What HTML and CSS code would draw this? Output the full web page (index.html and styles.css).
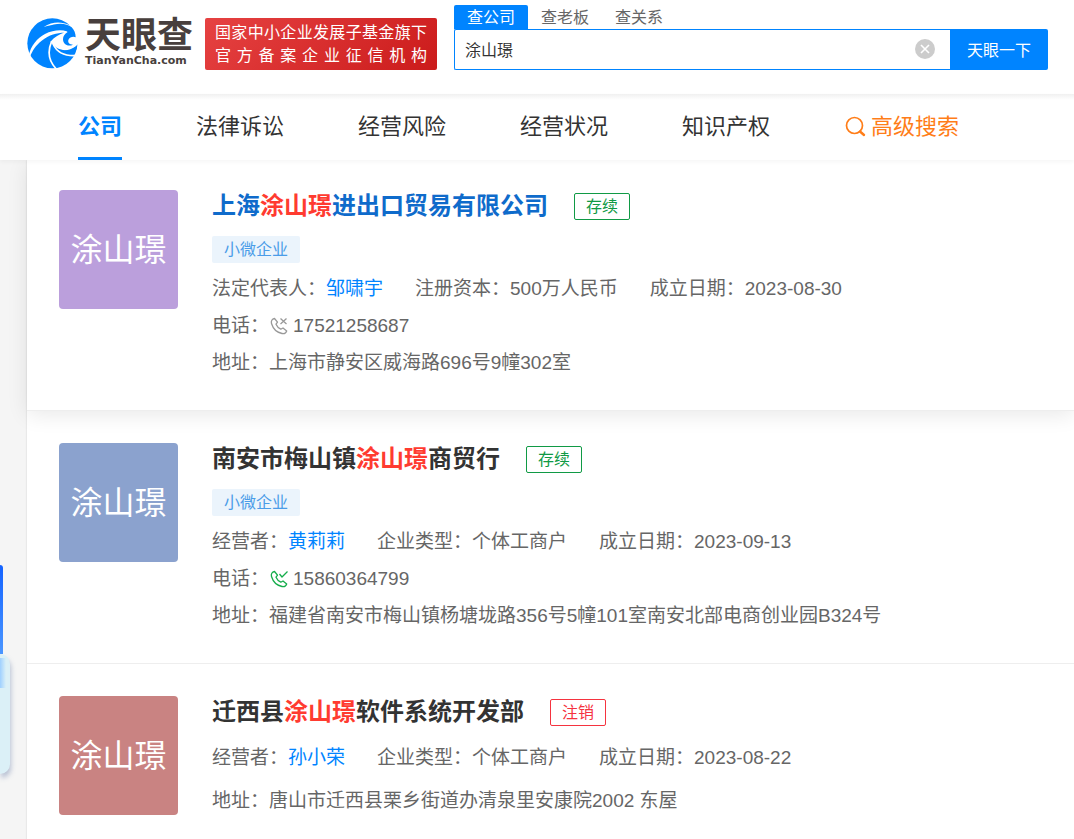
FILE: index.html
```html
<!DOCTYPE html>
<html lang="zh-CN">
<head>
<meta charset="utf-8">
<meta name="viewport" content="width=device-width, initial-scale=1">
<title>涂山璟 - 天眼查</title>
<link rel="stylesheet" href="styles.css">
</head>
<body>
<header class="header">
  <a class="logo" href="#">
    <svg class="logo-mark" viewBox="0 0 153 153" aria-hidden="true">
      <circle cx="76" cy="76" r="75" fill="#0084ff"/>
      <path fill="#fff" d="M50 27C76 10 104 10 128 22L138 14L156 40V72C146 92 128 100 108 96C96 94 88 90 82 84L70 72C82 56 98 48 112 44C90 44 66 50 44 68C26 82 16 98 9 116L5 112C12 84 30 60 54 48C76 37 100 34 122 40C106 24 78 18 50 27Z"/>
      <path fill="#0084ff" d="M60 26C88 14 118 14 134 28C142 36 146 46 146 58C138 54 128 58 124 66C122 74 128 80 138 80C122 88 108 78 108 64C108 54 113 48 122 42C112 34 84 26 60 26Z"/>
      <path fill="#0084ff" d="M86 94C106 102 132 98 151 82C150 94 145 104 138 111C116 116 98 108 86 94Z"/>
      <path fill="none" stroke="#fff" stroke-width="5" d="M78 78C88 100 108 114 144 113M88 153C66 130 60 102 74 70"/>
    </svg>
    <span class="logo-words"><span class="logo-name">天眼查</span><span class="logo-domain">TianYanCha.com</span></span>
  </a>
  <p class="banner"><span class="banner-line">国家中小企业发展子基金旗下</span><span class="banner-line">官方备案企业征信机构</span></p>
  <form class="search">
    <div class="search-tabs">
      <button type="button" class="search-tab search-tab-active">查公司</button>
      <button type="button" class="search-tab">查老板</button>
      <button type="button" class="search-tab">查关系</button>
    </div>
    <div class="search-row">
      <div class="search-box">
        <input class="search-input" type="text" aria-label="搜索公司" value="涂山璟">
        <button type="button" class="search-clear" aria-label="清空">
          <svg viewBox="0 0 20 20" width="20" height="20"><circle cx="10" cy="10" r="10" fill="#ccc"/><path d="M6 6l8 8M14 6l-8 8" stroke="#fff" stroke-width="1.6"/></svg>
        </button>
      </div>
      <button type="submit" class="search-submit">天眼一下</button>
    </div>
  </form>
</header>
<nav class="nav">
  <a class="nav-item nav-item-active" href="#">公司</a>
  <a class="nav-item" href="#">法律诉讼</a>
  <a class="nav-item" href="#">经营风险</a>
  <a class="nav-item" href="#">经营状况</a>
  <a class="nav-item" href="#">知识产权</a>
  <a class="nav-item nav-item-advanced" href="#"><svg class="nav-icon" viewBox="0 0 22 22" aria-hidden="true"><circle cx="10.500" cy="9.500" r="8" fill="none" stroke="currentColor" stroke-width="1.7"/><path d="M16 15.500l4 3.500" stroke="currentColor" stroke-width="2.400" stroke-linecap="round"/></svg>高级搜索</a>
</nav>
<main class="results">
  <article class="item item-hover">
    <div class="avatar avatar-purple">涂山璟</div>
    <div class="info">
      <div class="title-row"><h2 class="title"><a href="#">上海<em>涂山璟</em>进出口贸易有限公司</a></h2><span class="status">存续</span></div>
      <div class="tags"><span class="tag">小微企业</span></div>
      <div class="row"><span>法定代表人：<a href="#">邹啸宇</a></span><span>注册资本：500万人民币</span><span>成立日期：2023-08-30</span></div>
      <div class="row"><span class="phone">电话：<svg class="phone-icon phone-off" viewBox="0 0 18 18" aria-hidden="true"><path d="M4.500 1.500C2 2 .8 4 1.500 6.500C3 11.500 7 15.500 12 16.500C14.500 17 16 16 16.700 14L13 11L10.800 12.200C8.500 11 7 9.500 6 7.200L7.500 5.200Z"/><path d="M10.500 1.500l6 5.500M16.500 1.500l-6 5.500"/></svg>17521258687</span></div>
      <div class="row"><span>地址：上海市静安区威海路696号9幢302室</span></div>
    </div>
  </article>
  <article class="item">
    <div class="avatar avatar-blue">涂山璟</div>
    <div class="info">
      <div class="title-row"><h2 class="title"><a href="#">南安市梅山镇<em>涂山璟</em>商贸行</a></h2><span class="status">存续</span></div>
      <div class="tags"><span class="tag">小微企业</span></div>
      <div class="row"><span>经营者：<a href="#">黄莉莉</a></span><span>企业类型：个体工商户</span><span>成立日期：2023-09-13</span></div>
      <div class="row"><span class="phone">电话：<svg class="phone-icon phone-on" viewBox="0 0 18 18" aria-hidden="true"><path d="M4.500 1.500C2 2 .8 4 1.500 6.500C3 11.500 7 15.500 12 16.500C14.500 17 16 16 16.700 14L13 11L10.800 12.200C8.500 11 7 9.500 6 7.200L7.500 5.200Z"/><path d="M9.500 4l2.500 3l5.500-5.500"/></svg>15860364799</span></div>
      <div class="row"><span>地址：福建省南安市梅山镇杨塘垅路356号5幢101室南安北部电商创业园B324号</span></div>
    </div>
  </article>
  <article class="item item-plain">
    <div class="avatar avatar-red">涂山璟</div>
    <div class="info">
      <div class="title-row"><h2 class="title"><a href="#">迁西县<em>涂山璟</em>软件系统开发部</a></h2><span class="status status-closed">注销</span></div>
      <div class="row"><span>经营者：<a href="#">孙小荣</a></span><span>企业类型：个体工商户</span><span>成立日期：2023-08-22</span></div>
      <div class="row"><span>地址：唐山市迁西县栗乡街道办清泉里安康院2002 东屋</span></div>
    </div>
  </article>
</main>
<aside class="dock" aria-hidden="true"><div class="dock-strip"></div><div class="dock-card"></div></aside>
</body>
</html>
```
FILE: styles.css
```css
* { box-sizing: border-box; }
body {
  margin: 0;
  background: #f5f5f5;
  color: #333;
  font-family: "Liberation Sans", "Noto Sans CJK SC", sans-serif;
  font-size: 16px;
  overflow-x: hidden;
}
a { color: inherit; text-decoration: none; }
button, input { font: inherit; }
button { border: 0; padding: 0; background: none; cursor: pointer; }

.header {
  display: flex;
  align-items: flex-start;
  height: 94px;
  padding: 0 26px 0 27px;
  background: #fff;
}
.logo { display: flex; gap: 7px; margin-top: 18px; color: #483f3d; }
.logo-mark { width: 51px; height: 51px; }
.logo-words { display: flex; flex-direction: column; width: 109px; }
.logo-name { font-size: 36px; line-height: 36px; font-weight: bold; }
.logo-domain { font: bold 11px/14px "DejaVu Sans", sans-serif; }
.banner {
  width: 232px;
  height: 52px;
  margin: 18px 17px 0 11px;
  padding: 3px 10px;
  border-radius: 2px;
  background: linear-gradient(135deg, #e64242, #cb1b1b);
  color: #fff;
  white-space: nowrap;
}
.banner-line { display: block; line-height: 23px; text-align: justify; text-align-last: justify; }

.search { flex: 1; margin-top: 5px; }
.search-tabs { display: flex; }
.search-tab { height: 24px; padding: 2px 13px 0; line-height: 22px; color: #666; }
.search-tab-active { background: #0084ff; color: #fff; border-radius: 2px 2px 0 0; }
.search-row { display: flex; height: 41px; }
.search-box {
  display: flex;
  flex: 1;
  align-items: center;
  padding: 0 15px 2px 10px;
  border: 1px solid #0084ff;
  border-right: 0;
  border-radius: 2px 0 0 2px;
}
.search-input { flex: 1; min-width: 0; padding: 0; border: 0; outline: 0; color: #333; background: none; }
.search-clear { display: flex; }
.search-submit { width: 98px; padding-bottom: 2px; background: #0084ff; color: #fff; border-radius: 0 2px 2px 0; }

.nav {
  display: flex;
  gap: 74px;
  height: 66px;
  padding: 0 78px;
  background: #fff linear-gradient(#f0f0f0, #fff) no-repeat 0 0 / 100% 6px;
  position: relative;
  z-index: 1;
  box-shadow: 0 2px 4px rgba(0, 0, 0, .04);
  font-size: 22px;
  line-height: 66px;
  white-space: nowrap;
}
.nav-item-active { color: #0084ff; font-weight: bold; border-bottom: 3px solid #0084ff; }
.nav-item-advanced { display: flex; align-items: center; gap: 5px; color: #ff7d18; }
.nav-icon { width: 22px; height: 22px; }

.results { margin-left: 27px; background: #fff; box-shadow: 0 0 2px rgba(0, 0, 0, .15); }
.item { display: flex; gap: 34px; padding: 32px 32px 29px; border-bottom: 1px solid #eee; }
.item-hover { padding-top: 30px; box-shadow: 0 4px 20px rgba(0, 0, 0, .09); }
.avatar {
  flex: none;
  width: 119px;
  height: 119px;
  border-radius: 4px;
  color: #fff;
  font-size: 32px;
  line-height: 121px;
  text-align: center;
}
.avatar-purple { background: #bb9fdc; }
.avatar-blue { background: #8ba2ce; }
.avatar-red { background: #c98382; }
.info { flex: 1; min-width: 0; color: #666; font-size: 19px; }
.title-row { display: flex; align-items: center; gap: 26px; height: 32px; }
.title { margin: 0; font-size: 24px; line-height: 32px; color: #333; }
.title em { color: #ff3b30; font-style: normal; }
.item-hover .title { color: #0f6bcb; }
.status {
  padding: 0 11px;
  border: 1px solid #109a45;
  border-radius: 2px;
  color: #109a45;
  font-size: 16px;
  line-height: 25px;
}
.status-closed { border-color: #f5333f; color: #f5333f; }
.tags { display: flex; margin: 14px 0 7px; }
.tag { padding: 0 12px; border-radius: 2px; background: #ebf4fc; color: #4a9ce8; font-size: 16px; line-height: 27px; }
.row { display: flex; gap: 32px; line-height: 37px; white-space: nowrap; }
.row a { color: #0084ff; }
.item-plain .title-row { margin-bottom: 11px; }
.item-plain .row { margin-bottom: 6px; }
.phone { display: flex; align-items: center; }
.phone-icon { width: 18px; height: 18px; margin: 0 5px 0 1px; fill: none; stroke: currentColor; stroke-width: 1.3; stroke-linejoin: round; }
.phone-off { color: #999; }
.phone-on { color: #15ad4b; }

.dock { position: fixed; left: 0; bottom: 65px; }
.dock-strip { width: 3px; height: 89px; border-radius: 0 3px 0 0; background: linear-gradient(#1463ff, #4b96ff); }
.dock-card {
  width: 10px;
  height: 120px;
  border-radius: 0 10px 10px 0;
  background: linear-gradient(90deg, #9fd0ff, #dbf0f7 6px) no-repeat 0 4px / 6px 30px, #dbf0f7;
  box-shadow: 1px 4px 5px rgba(70, 95, 150, .35);
}
```
